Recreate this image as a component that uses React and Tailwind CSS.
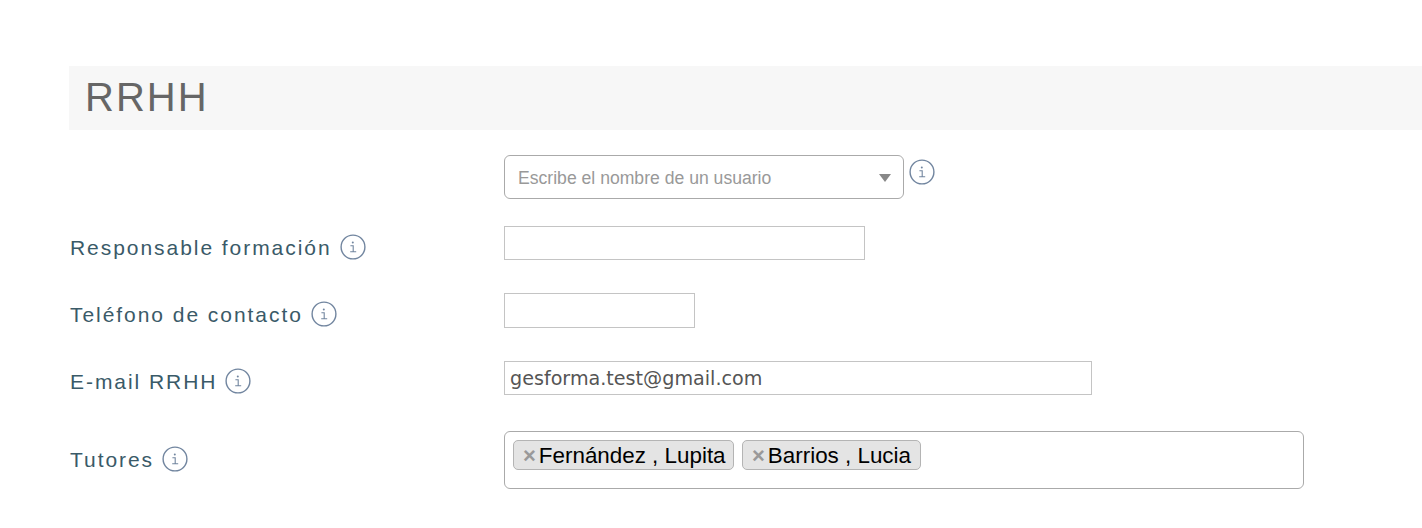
const font = "font-['Liberation_Sans',Arial,sans-serif]";

const InfoIcon = ({ className = '' }) => (
  <svg viewBox="0 0 26 26" className={`w-[26px] h-[26px] shrink-0 ${className}`} fill="none" stroke="#71859f">
    <circle cx="13" cy="13" r="11.9" strokeWidth="1.4" />
    <circle cx="12.8" cy="8.4" r="1" fill="#71859f" stroke="none" />
    <path d="M10.4 11.8h2.8v5.8M10.2 17.8h6" strokeWidth="1.1" />
  </svg>
);

const Label = ({ text, className = '' }) => (
  <div className={`w-[435px] shrink-0 pl-px flex items-center gap-2 ${className}`}>
    <span className="mt-0.5 text-[21px] leading-[26px] tracking-[1.95px] text-[#3a5a68]">{text}</span>
    <InfoIcon />
  </div>
);

const Tag = ({ name, className = '' }) => (
  <span className={`h-[30px] flex items-center rounded-[5px] border border-[#b4b4b4] bg-[#e4e4e4] pl-[9px] pt-px text-[22.4px] leading-[28px] text-black ${className}`}>
    <span className="text-[#999] font-bold text-[22px] leading-none mr-[3px]">×</span>
    {name}
  </span>
);

export default function App() {
  return (
    <div className={`${font} bg-white h-[528px] overflow-hidden pt-[66px] pl-[69px]`}>
      <div className="h-16 bg-[#f7f7f7] flex items-center pl-4 pb-0.5">
        <h1 className="text-[40px] leading-none tracking-[2px] text-[#666]">RRHH</h1>
      </div>

      <div className="flex items-start mt-[25px]">
        <div className="w-[435px] shrink-0" />
        <div className="w-[400px] h-11 rounded-md border border-[#aaa] flex items-center justify-between pl-[13px] pr-[12px] pt-0.5">
          <span className="text-[17.6px] text-[#999]">Escribe el nombre de un usuario</span>
          <span className="w-0 h-0 border-x-[6px] border-x-transparent border-t-[8px] border-t-[#888]" />
        </div>
        <InfoIcon className="ml-[5px] mt-[4px]" />
      </div>

      <div className="flex items-center mt-[27px] h-[34px]">
        <Label text="Responsable formación" className="mt-2" />
        <div className="w-[361px] h-[34px] border border-[#c4c4c4]" />
      </div>

      <div className="flex items-center mt-[33px] h-[35px]">
        <Label text="Teléfono de contacto" className="mt-[7px]" />
        <div className="w-[191px] h-[35px] border border-[#c4c4c4]" />
      </div>

      <div className="flex items-center mt-[33px] h-[34px]">
        <Label text="E-mail RRHH" className="mt-[6px]" />
        <div className="w-[588px] h-[34px] border border-[#c4c4c4] flex items-center pl-[5px] pt-0.5 font-['DejaVu_Sans',Verdana,sans-serif] text-[19.15px] text-[#555]">
          gesforma.test@gmail.com
        </div>
      </div>

      <div className="flex items-center mt-9 h-[58px]">
        <Label text="Tutores" className="mb-[3px]" />
        <div className="w-[800px] h-[58px] rounded-md border border-[#aaa] flex items-start gap-2 pt-2 pl-2">
          <Tag name="Fernández , Lupita" className="w-[221px]" />
          <Tag name="Barrios , Lucia" className="w-[179px]" />
        </div>
      </div>
    </div>
  );
}
